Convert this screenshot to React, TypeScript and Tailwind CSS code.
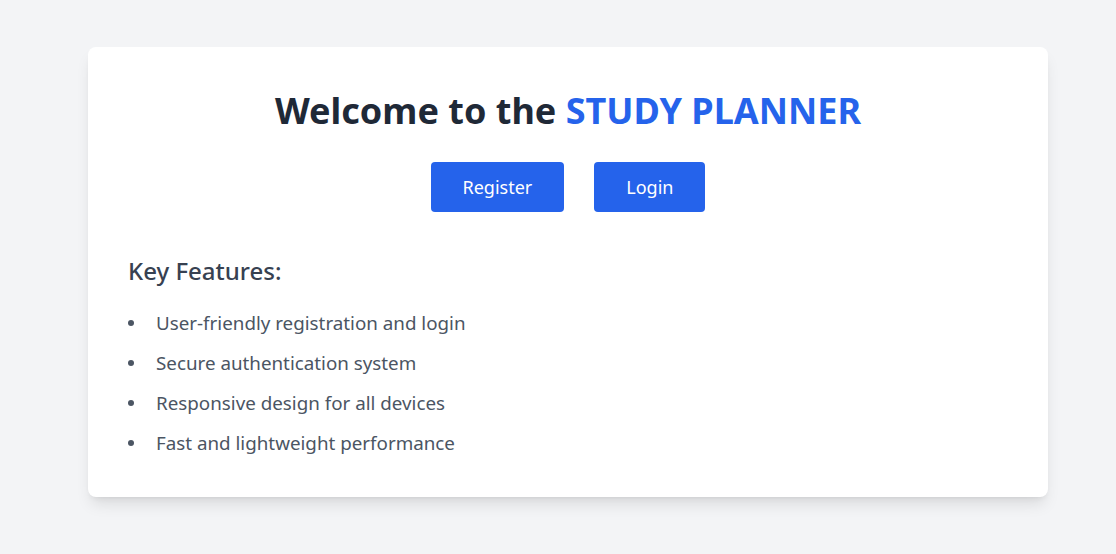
export default function App() {
  const features = [
    "User-friendly registration and login",
    "Secure authentication system",
    "Responsive design for all devices",
    "Fast and lightweight performance",
  ];

  return (
    <div className="min-h-screen bg-[#f3f4f6] pt-[47px] font-['Noto_Sans',sans-serif]">
      <div className="ml-[88px] w-[960px] rounded-lg bg-white p-10 shadow-lg">
        <h1 className="mt-1 text-center text-4xl font-bold text-[#1f2937]">
          Welcome to the <span className="text-[#2563eb]">STUDY PLANNER</span>
        </h1>

        {/* Actions */}
        <div className="mt-[31px] flex justify-center gap-[30px]">
          <button className="rounded bg-[#2563eb] px-8 py-[11px] text-lg text-white">
            Register
          </button>
          <button className="rounded bg-[#2563eb] px-8 py-[11px] text-lg text-white">
            Login
          </button>
        </div>

        {/* Features */}
        <h2 className="mt-[43px] text-2xl font-medium text-[#374151]">Key Features:</h2>
        <ul className="mt-[22px] space-y-3">
          {features.map((f) => (
            <li key={f} className="flex items-center text-[18.8px] leading-7 text-[#4b5563]">
              <span className="mr-[22px] h-1.5 w-1.5 rounded-full bg-[#4b5563]"></span>
              {f}
            </li>
          ))}
        </ul>
      </div>
    </div>
  );
}
